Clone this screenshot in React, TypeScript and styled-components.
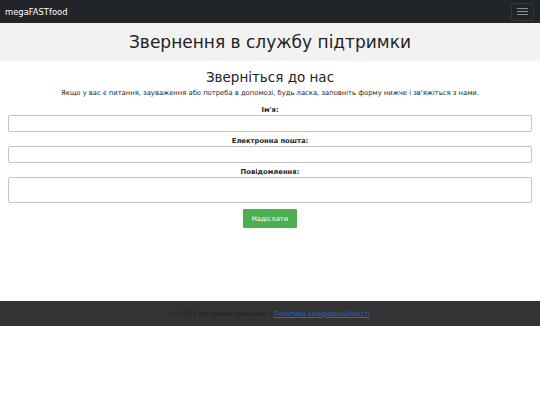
import React from 'react';
import styled, { createGlobalStyle } from 'styled-components';

const GlobalStyle = createGlobalStyle`
  body {
    margin: 0;
    background: #fff;
    font-family: "DejaVu Sans", "Noto Sans", sans-serif;
    color: #212529;
  }
  * { box-sizing: border-box; }
`;

const Navbar = styled.nav`
  height: 23px;
  background: #212529;
  display: flex;
  align-items: center;
  justify-content: space-between;
  padding: 0 6px 0 5px;
`;

const Brand = styled.a`
  color: #fff;
  font-size: 8.4px;
  text-decoration: none;
`;

const Toggler = styled.button`
  width: 23px;
  height: 18px;
  border: 1px solid #33383d;
  border-radius: 3px;
  background: transparent;
  display: flex;
  flex-direction: column;
  align-items: center;
  justify-content: center;
  gap: 2px;
  padding: 0;
  span {
    display: block;
    width: 11px;
    height: 1px;
    background: #8c8f92;
  }
`;

const Header = styled.header`
  height: 38px;
  background: #f2f2f2;
  display: flex;
  align-items: center;
  justify-content: center;
  h1 {
    margin: 0;
    font-weight: 400;
    font-size: 17px;
    color: #222;
  }
`;

const Main = styled.main`
  padding: 6px 8px 0;
  height: 240px;
  text-align: center;
`;

const Subtitle = styled.h2`
  margin: 0;
  font-weight: 400;
  font-size: 13.5px;
  line-height: 20px;
  color: #222;
`;

const Intro = styled.p`
  margin: 1px 0 7px;
  font-size: 6.8px;
  line-height: 10px;
`;

const Form = styled.form`
  display: flex;
  flex-direction: column;
  align-items: center;
`;

const Label = styled.label`
  font-weight: 700;
  font-size: 6.8px;
  line-height: 10px;
`;

const Field = styled.input`
  width: 100%;
  height: 17px;
  border: 1px solid #c4c4c4;
  border-radius: 2px;
  margin-bottom: 4px;
  font-family: inherit;
`;

const Area = styled.textarea`
  width: 100%;
  height: 26px;
  border: 1px solid #c4c4c4;
  border-radius: 2px;
  margin: 0 0 6px;
  resize: none;
  font-family: inherit;
  display: block;
`;

const Submit = styled.button`
  width: 54px;
  height: 19px;
  background: #4caf50;
  color: #fff;
  border: none;
  border-radius: 1px;
  font-family: inherit;
  font-size: 6.8px;
  padding: 0;
`;

const Footer = styled.footer`
  height: 25px;
  background: #333;
  display: flex;
  align-items: center;
  justify-content: center;
  font-size: 6.7px;
  color: #222;
  a {
    color: #2466cc;
    margin-left: 2px;
  }
`;

export default function App() {
  return (
    <>
      <GlobalStyle />
      <Navbar>
        <Brand href="#">megaFASTfood</Brand>
        <Toggler aria-label="menu">
          <span />
          <span />
          <span />
        </Toggler>
      </Navbar>
      <Header>
        <h1>Звернення в службу підтримки</h1>
      </Header>
      <Main>
        <Subtitle>Зверніться до нас</Subtitle>
        <Intro>
          Якщо у вас є питання, зауваження або потреба в допомозі, будь ласка, заповніть форму нижче і зв'яжіться з нами.
        </Intro>
        <Form>
          <Label htmlFor="name">Ім'я:</Label>
          <Field id="name" type="text" />
          <Label htmlFor="email">Електронна пошта:</Label>
          <Field id="email" type="email" />
          <Label htmlFor="message">Повідомлення:</Label>
          <Area id="message" />
          <Submit type="button">Надіслати</Submit>
        </Form>
      </Main>
      <Footer>
        © 2023 Всі права захищені. | <a href="#">Політика конфіденційності</a>
      </Footer>
    </>
  );
}
